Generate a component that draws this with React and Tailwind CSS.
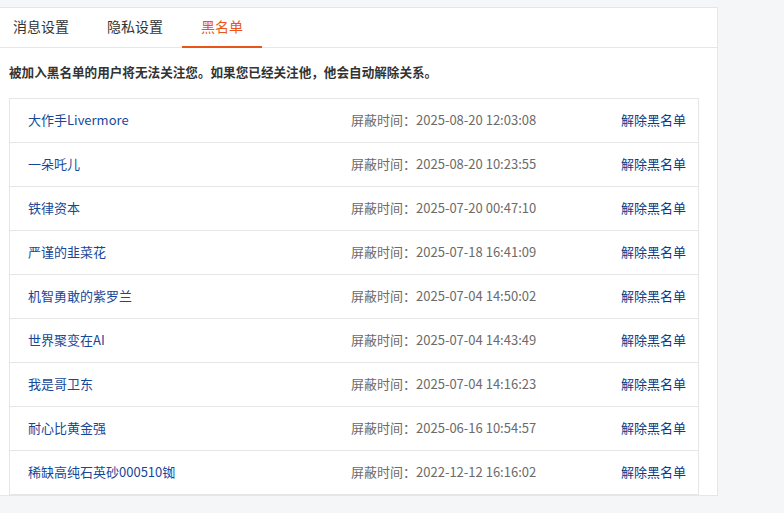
import React from 'react';

const rows = [
  { name: '大作手Livermore', time: '2025-08-20 12:03:08' },
  { name: '一朵吒儿', time: '2025-08-20 10:23:55' },
  { name: '铁律资本', time: '2025-07-20 00:47:10' },
  { name: '严谨的韭菜花', time: '2025-07-18 16:41:09' },
  { name: '机智勇敢的紫罗兰', time: '2025-07-04 14:50:02' },
  { name: '世界聚变在AI', time: '2025-07-04 14:43:49' },
  { name: '我是哥卫东', time: '2025-07-04 14:16:23' },
  { name: '耐心比黄金强', time: '2025-06-16 10:54:57' },
  { name: '稀缺高纯石英砂000510铷', time: '2022-12-12 16:16:02' },
];

const tabs = ['消息设置', '隐私设置', '黑名单'];

const App = () => {
  return (
    <div
      className="min-h-[513px] bg-[#f5f6f8] pt-[7px]"
      style={{ fontFamily: '"Noto Sans CJK SC", "Noto Sans", sans-serif' }}
    >
      <div className="w-[718px] bg-white border border-l-0 border-[#e5e6e8]">
        {/* tabs */}
        <div className="h-[40px] flex border-b border-[#e5e6e8] -ml-[6px]">
          {tabs.map((t, i) => (
            <div
              key={t}
              className={
                i === 2
                  ? 'px-[19px] pb-[2px] flex items-center text-[14px] text-[#e8561b] border-b-2 border-[#e8561b] -mb-px'
                  : 'px-[19px] pb-[2px] flex items-center text-[14px] text-[#333]'
              }
            >
              {t}
            </div>
          ))}
        </div>

        <p className="pl-[9px] pt-[15px] h-[50px] text-[12.6px] font-bold text-[#333]">
          被加入黑名单的用户将无法关注您。如果您已经关注他，他会自动解除关系。
        </p>

        <div className="ml-[9px] w-[690px] border border-b-0 border-[#e5e6e8]">
          {rows.map((r, i) => (
            <div
              key={i}
              className="h-[44px] flex items-center pl-[18px] pr-[12px] pb-px text-[13px] border-b border-[#e5e6e8]"
            >
              <div className="w-[323px] text-[#17479a]">{r.name}</div>
              <div className="flex-1 text-[#6b6b6b]">屏蔽时间：{r.time}</div>
              <div className="text-[#0b3a8a]">解除黑名单</div>
            </div>
          ))}
        </div>
      </div>
    </div>
  );
};

export default App;
